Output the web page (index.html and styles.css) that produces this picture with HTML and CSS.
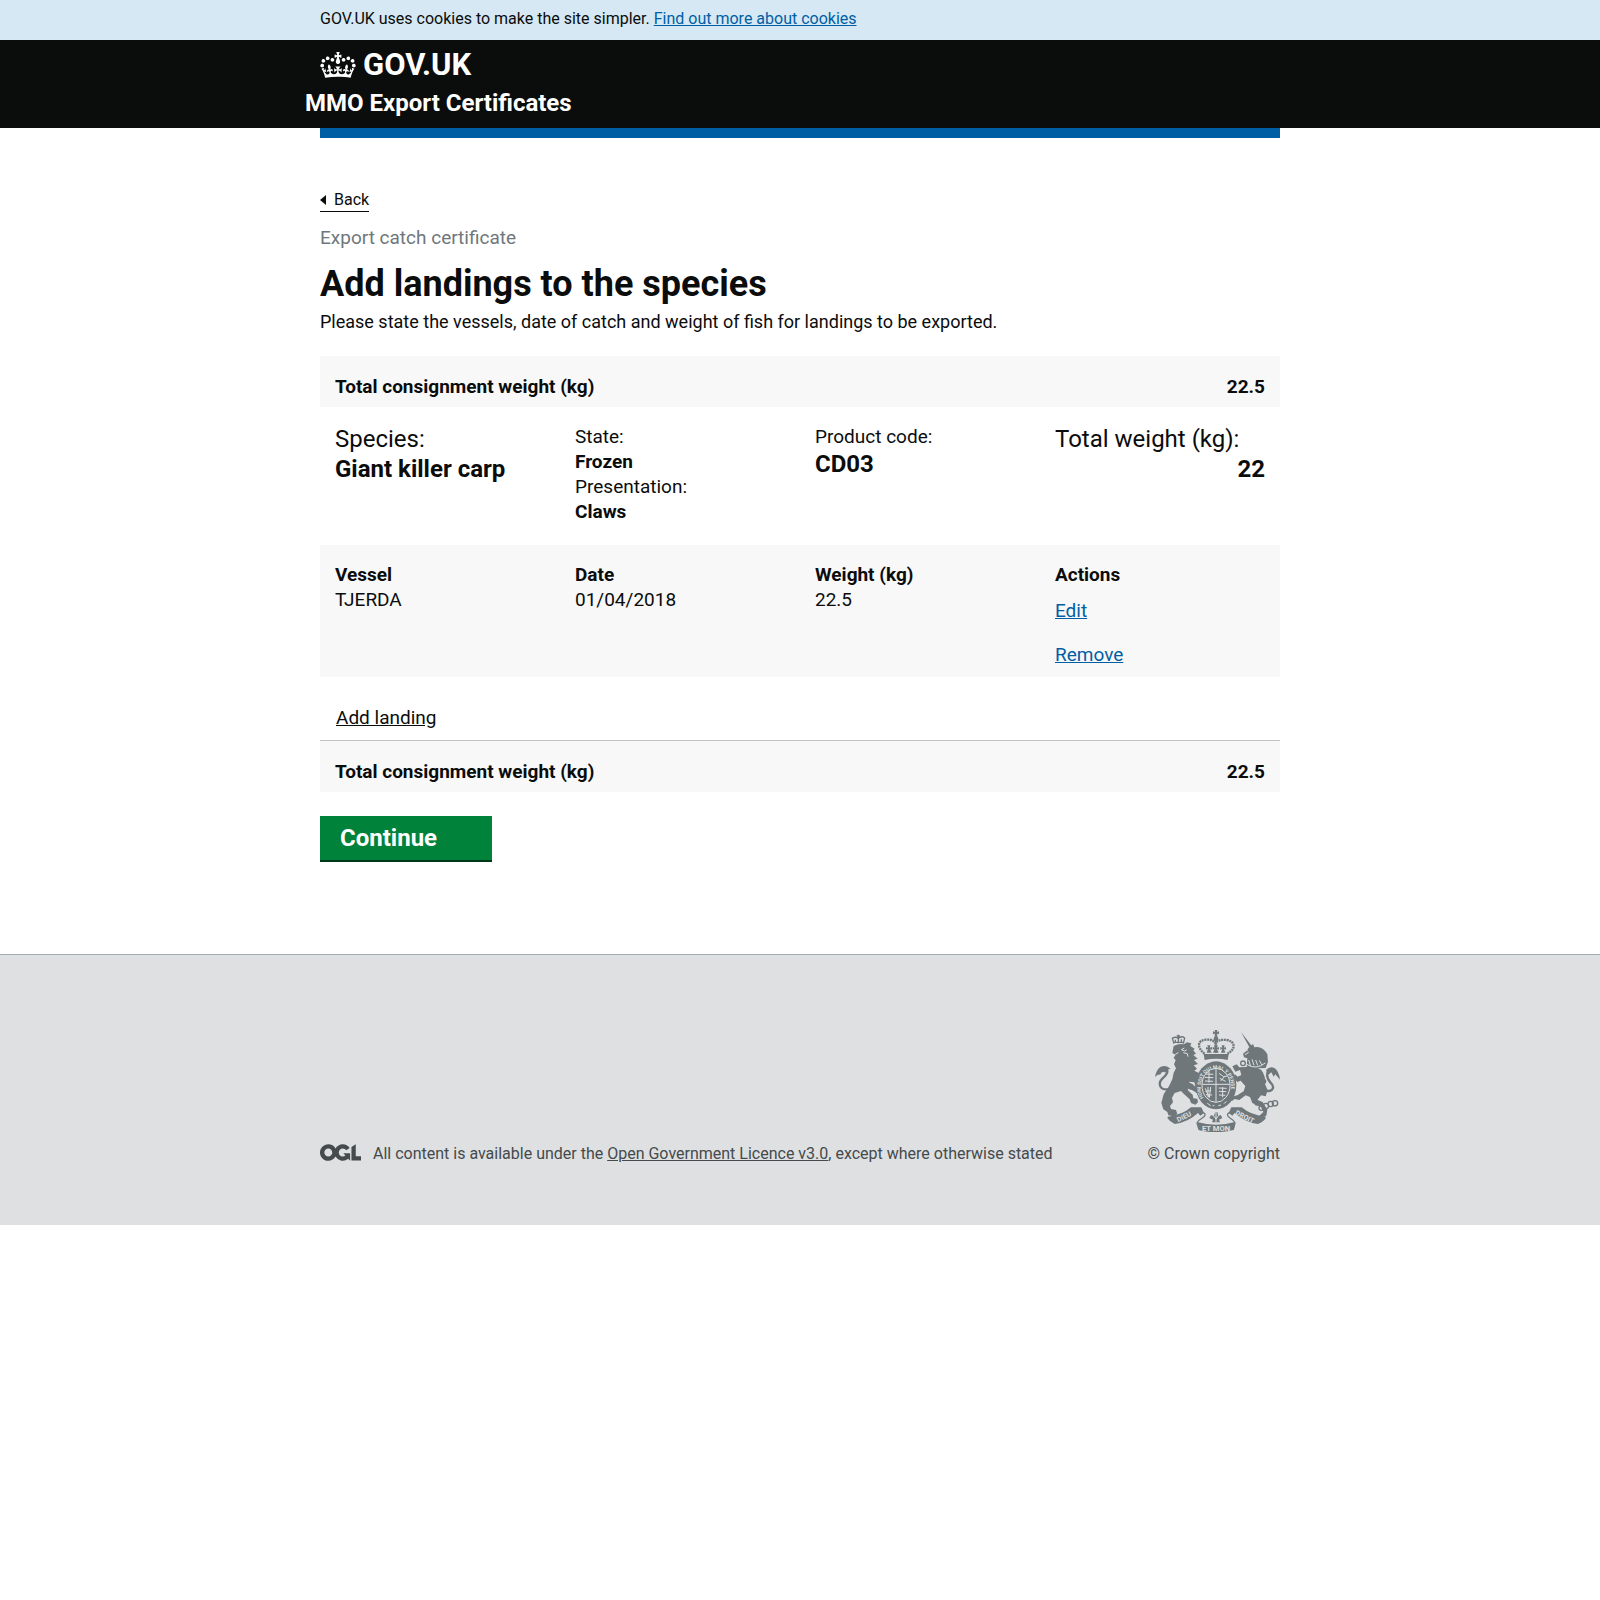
FILE: index.html
```html
<!DOCTYPE html>
<html lang="en">
<head>
<meta charset="utf-8">
<meta name="viewport" content="width=device-width, initial-scale=1">
<title>Add landings to the species - MMO Export Certificates - GOV.UK</title>
<link rel="stylesheet" href="styles.css">
</head>
<body>
<div class="cookie-bar">
  <p class="container cookie-text">GOV.UK uses cookies to make the site simpler. <a class="link" href="#cookies">Find out more about cookies</a></p>
</div>

<header class="header">
  <div class="container">
    <a class="brand" href="#home">
      <svg class="crown" viewBox="0 0 132 97" width="36" height="26" aria-hidden="true"><path fill="currentColor" fill-rule="evenodd" d="M25 30.2c3.5 1.5 7.7-.2 9.1-3.7 1.5-3.6-.2-7.8-3.9-9.2-3.6-1.4-7.6.3-9.1 3.9-1.4 3.5.3 7.5 3.9 9zM9 39.5c3.6 1.5 7.8-.2 9.2-3.7 1.5-3.6-.2-7.8-3.9-9.1-3.6-1.5-7.6.2-9.1 3.8-1.4 3.5.3 7.5 3.8 9zM4.4 57.2c3.5 1.5 7.7-.2 9.1-3.8 1.5-3.6-.2-7.7-3.9-9.1-3.5-1.5-7.6.3-9.1 3.8-1.4 3.5.3 7.6 3.9 9.1zm38.3-21.4c3.5 1.5 7.7-.2 9.1-3.8 1.5-3.6-.2-7.7-3.9-9.1-3.6-1.5-7.6.3-9.1 3.8-1.3 3.6.4 7.7 3.9 9.1zm64.4-5.6c-3.6 1.5-7.8-.2-9.1-3.7-1.5-3.6.2-7.8 3.8-9.2 3.6-1.4 7.7.3 9.2 3.9 1.3 3.5-.4 7.5-3.9 9zm15.9 9.3c-3.6 1.5-7.7-.2-9.1-3.7-1.5-3.6.2-7.8 3.7-9.1 3.6-1.5 7.7.2 9.2 3.8 1.5 3.5-.3 7.5-3.8 9zm4.7 17.7c-3.6 1.5-7.8-.2-9.2-3.8-1.5-3.6.2-7.7 3.9-9.1 3.6-1.5 7.7.3 9.2 3.8 1.3 3.5-.4 7.6-3.9 9.1zM89.3 35.8c-3.6 1.5-7.8-.2-9.2-3.8-1.4-3.6.2-7.7 3.9-9.1 3.6-1.5 7.7.3 9.2 3.8 1.4 3.6-.3 7.7-3.9 9.1zM69.7 17.7l8.9 4.7V9.3l-8.9 2.8c-.2-.3-.5-.6-.9-.9L72.4 0H59.6l3.5 11.2c-.3.3-.6.5-.9.9l-8.8-2.8v13.1l8.8-4.7c.3.3.6.7.9.9l-5 15.4v.1c-.2.8-.4 1.6-.4 2.4 0 4.1 3.1 7.5 7 8.1h.2c.3 0 .7.1 1 .1.4 0 .7 0 1-.1h.2c4-.6 7.1-4.1 7.1-8.1 0-.8-.1-1.7-.4-2.4V34l-5.1-15.4c.4-.2.7-.6 1-.9zM66 92.8c16.9 0 32.8 1.1 47.1 3.2 4-16.9 8.9-26.7 14-33.5l-9.6-3.4c1 4.9 1.1 7.2 0 10.2-1.5-1.4-3-4.3-4.2-8.7L108.6 76c2.8-2 5-3.2 7.5-3.3-4.4 9.4-10 11.9-13.6 11.2-4.3-.8-6.3-4.6-5.6-7.9 1-4.7 5.7-5.9 8-.5 4.3-8.7-3-11.4-7.6-8.8 7.1-7.2 7.9-13.5 2.1-21.1-8 6.1-8.1 12.3-4.5 20.8-4.7-5.4-12.1-2.5-9.5 6.2 3.4-5.2 7.9-2 7.2 3.1-.6 4.3-6.4 7.8-13.5 7.2-10.3-.9-10.9-8-11.2-13.8 2.5-.5 7.1 1.8 11 7.3L80.2 60c-4.1 4.4-8 5.3-12.3 5.4 1.4-4.4 8-11.6 8-11.6H55.5s6.4 7.2 7.9 11.6c-4.2-.1-8-1-12.3-5.4l1.4 16.4c3.9-5.5 8.5-7.7 10.9-7.3-.3 5.8-.9 12.8-11.1 13.8-7.2.6-12.9-2.9-13.5-7.2-.7-5 3.8-8.3 7.1-3.1 2.7-8.7-4.6-11.6-9.4-6.2 3.7-8.5 3.6-14.7-4.6-20.8-5.8 7.6-5 13.9 2.2 21.1-4.7-2.6-11.9.1-7.7 8.8 2.3-5.5 7.1-4.2 8.1.5.7 3.3-1.3 7.1-5.7 7.9-3.5.7-9-1.8-13.5-11.2 2.5.1 4.7 1.3 7.5 3.3l-4.7-15.4c-1.2 4.4-2.7 7.2-4.3 8.7-1.1-3-.9-5.3 0-10.2l-9.5 3.4c5 6.9 9.9 16.7 14 33.5 14.8-2.1 30.8-3.2 47.7-3.2z"/></svg>
      <span>GOV.UK</span>
    </a>
    <a class="service-name" href="#service">MMO Export Certificates</a>
  </div>
</header>
<div class="container"><div class="blue-bar"></div></div>

<main class="container main">
  <a class="back-link" href="#back">Back</a>
  <p class="caption">Export catch certificate</p>
  <h1 class="title">Add landings to the species</h1>
  <p class="lead">Please state the vessels, date of catch and weight of fish for landings to be exported.</p>

  <div class="total"><span>Total consignment weight (kg)</span><span>22.5</span></div>

  <dl class="species">
    <div class="species-cell large"><dt>Species:</dt><dd>Giant killer carp</dd></div>
    <div class="species-cell"><dt>State:</dt><dd>Frozen</dd><dt>Presentation:</dt><dd>Claws</dd></div>
    <div class="species-cell code"><dt>Product code:</dt><dd>CD03</dd></div>
    <div class="species-cell large weight"><dt>Total weight (kg):</dt><dd>22</dd></div>
  </dl>

  <table class="landings">
    <thead>
      <tr><th scope="col">Vessel</th><th scope="col">Date</th><th scope="col">Weight (kg)</th><th scope="col">Actions</th></tr>
    </thead>
    <tbody>
      <tr>
        <td>TJERDA</td><td>01/04/2018</td><td>22.5</td>
        <td><div class="actions"><a class="link" href="#edit">Edit</a><a class="link" href="#remove">Remove</a></div></td>
      </tr>
    </tbody>
  </table>

  <div class="add-row"><button class="add-landing" type="button">Add landing</button></div>
  <div class="total"><span>Total consignment weight (kg)</span><span>22.5</span></div>
  <button class="continue" type="submit">Continue</button>
</main>

<footer class="footer">
  <div class="container footer-row">
    <div class="licence">
      <svg class="ogl" viewBox="0 0 483.2 195.7" width="41" height="17" role="img" aria-label="Open Government Licence"><path fill="currentColor" d="M421.5 142.8V.1l-50.7 32.3v161.1h112.4v-50.7zm-122.3-9.6A47.12 47.12 0 0 1 221 97.8c0-26 21.1-47.1 47.1-47.1 16.7 0 31.4 8.7 39.7 21.8l42.7-27.2A97.63 97.63 0 0 0 268.1 0c-36.5 0-68.3 20.1-85.1 49.7A98 98 0 0 0 97.8 0C43.9 0 0 43.9 0 97.8s43.9 97.8 97.8 97.8c36.5 0 68.3-20.1 85.1-49.7a97.76 97.76 0 0 0 149.6 25.4l19.4 22.2h3v-87.8h-80l24.3 27.5zM97.8 145c-26 0-47.1-21.1-47.1-47.1s21.1-47.1 47.1-47.1 47.1 21.1 47.1 47.1S123.8 145 97.8 145"/></svg>
      <p>All content is available under the <a class="footer-link" href="#ogl">Open Government Licence v3.0</a>, except where otherwise stated</p>
    </div>
    <a class="copyright" href="#copyright">
      <svg class="arms" viewBox="45 30 375 306" width="125" height="102" aria-hidden="true">
        <defs>
          <path id="motto" d="M191 234A46 55 0 1 1 265 234"/>
        </defs>
        <g class="ink">
          <!-- centre crown -->
          <path d="M224 30h8l-1 6 6-2v9l-6-2 1 9h-8l1-9-6 2v-9l6 2z"/>
          <circle cx="228" cy="56" r="7"/>
          <path d="M191 102L266 102L263 120Q228 112 194 120Z"/>
          <path class="line dotted" d="M194 101C167 80 175 60 198 59C214 58 222 62 226 69C232 61 246 58 260 60C285 64 290 86 262 101"/>
          <path class="line dotted" d="M228 60V98"/>
          <path d="M200 98l4-12-6 3v-8l6 2-2-7h9l-2 7 7-2v8l-6-3 5 12zM219 98l5-12-6 3v-8l6 2-2-7h11l-2 7 6-2v8l-6-3 5 12zM243 98l4-12-6 3v-8l6 2-2-7h9l-2 7 6-2v8l-6-3 4 12z"/>
          <!-- lion crown -->
          <path class="line thin" d="M102 71L97 55Q107 48 115 56Q124 46 134 54L130 71M115 44V70M110 48H120M101 67H131M106 59v9M124 58v9"/>
          <!-- lion -->
          <path d="M101 78Q116 70 132 73L141 67L154 70L151 78L164 86L160 91L168 101L160 105L173 116L162 120L174 132L161 136L171 146L163 152L178 160L182 176L174 183L177 196L167 202L163 187L147 185L139 196L145 212L158 224L160 235L172 236L174 247L166 254L153 249L149 238L131 221L123 213L104 219L96 233L99 247L90 258L93 267L108 270L112 282L102 289L85 286L82 276L70 268L64 249L71 223L86 200L97 178L101 158L108 145L102 133L107 121L101 113L107 104L97 99Z"/>
          <path d="M130 178L158 193L177 209L189 205L193 216L180 225L157 211L134 203Z"/>
          <path class="line tail" d="M85 208C58 211 53 190 67 176C82 163 88 151 75 143"/>
          <path d="M45 171Q48 151 61 141Q78 132 92 147Q82 146 76 158Q67 151 60 164Q53 161 45 171Z"/>
          <!-- unicorn -->
          <path d="M303 36L337 80L329 83Z"/>
          <path d="M326 83L339 72L343 82Q366 76 382 102L384 125L377 144L353 145L364 150Q378 169 375 192L383 211L377 229L363 226L352 240L368 246L382 269L379 287L366 295L358 287L370 276L363 261L337 249L330 231L317 226L298 240L284 237L275 244L274 231L292 226L311 214L316 198L302 182L292 186L281 174L284 162L293 170L304 165L300 150L286 155L277 139L290 133L298 142L320 141L322 115L312 112L309 101L320 92Z"/>
          <path class="line tail" d="M369 210C400 220 406 201 391 187C377 172 380 153 390 149"/>
          <path d="M378 150Q390 137 403 144Q417 153 420 179L406 163L401 170L394 157L385 164Z"/>
          <!-- chain -->
          <g class="line thin"><circle cx="309" cy="130" r="7"/><circle cx="351" cy="249" r="6"/><circle cx="364" cy="264" r="7"/><circle cx="378" cy="258" r="8"/><circle cx="392" cy="252" r="8"/><circle cx="405" cy="250" r="8"/><circle cx="371" cy="184" r="6"/></g>
          <!-- garter and ribbons -->
          <ellipse cx="228" cy="196" rx="61" ry="72"/>
          <path d="M84 290Q126 285 153 262L184 262L192 279L181 287L174 279Q144 307 104 312Q89 305 82 294Z"/>
          <path d="M374 290Q332 285 305 262L274 262L266 279L277 287L284 279Q314 307 354 312Q371 305 378 293Z"/>
          <path d="M171 306Q228 322 285 306L281 330Q228 343 177 331Z"/>
          <path class="line thin" d="M190 278Q202 283 187 294Q174 301 171 309L177 329M268 278Q256 284 270 294Q282 301 285 309L280 328"/>
          <path d="M226 276l6 0 3 12 7-3 5 9-10 5 3 8h-24l3-8-11-5 5-9 8 4z"/>
        </g>
        <g class="paper-line">
          <ellipse cx="228" cy="196" rx="42" ry="51"/>
          <path d="M228 146V246M187 193H269"/>
          <path d="M196 162l24 1M194 172l26 1M195 183l24 1M207 154v34M237 160l14 10 11-2M242 183l13-15M239 175l18 9M196 205l11 27M204 201v31M212 201l-4 32M196 214l17-2M198 224l18 1M236 204l24 1M237 214l22 1M237 225l19 1M248 201v31"/>
          <path d="M202 250l10 7M218 257h5M235 257l8-2M252 251l7-7"/>
          <path d="M133 84l-9 5 10 4 6-3M130 98l12 3 2 9M115 98l-9 5M315 104l11-7M318 88l5 5M326 120l6 18M336 118l6 18M347 120l6 16M358 121l8 14M320 133q28 18 56-4"/>
          <path d="M221 288l7 9 7-9M228 276v30"/>
        </g>
        <g class="motto">
          <text font-size="15"><textPath href="#motto">HONI SOIT QUI MAL Y PENSE</textPath></text>
          <text font-size="21" transform="translate(115 307) rotate(-27)">DIEU</text>
          <text font-size="21" transform="translate(284 283) rotate(27)">DROIT</text>
          <text font-size="23" x="228" y="332" text-anchor="middle">ET MON</text>
        </g>
      </svg>
      <span>© Crown copyright</span>
    </a>
  </div>
</footer>
</body>
</html>
```
FILE: styles.css
```css
* { box-sizing: border-box; }

body {
  margin: 0;
  background: #fff;
  color: #0b0c0c;
  font-family: Roboto, "Liberation Sans", Arial, sans-serif;
  font-size: 19px;
  line-height: 25px;
}

h1, p, dl, dd { margin: 0; }

.container {
  width: 100%;
  max-width: 960px;
  margin: 0 auto;
}

.link { color: #005ea5; }

.cookie-bar {
  padding: 9px 0 11px;
  background: #d5e8f3;
}
.cookie-text {
  font-size: 16px;
  line-height: 20px;
}

.header {
  padding: 9px 0 10px;
  background: #0b0c0c;
  color: #fff;
}
.brand {
  display: flex;
  align-items: center;
  gap: 7px;
  width: max-content;
  margin-bottom: 7px;
  color: #fff;
  font-size: 31px;
  font-weight: 700;
  line-height: 32px;
  text-decoration: none;
}
.service-name {
  display: block;
  margin-left: -15px;
  color: #fff;
  font-size: 24px;
  font-weight: 700;
  line-height: 30px;
  text-decoration: none;
}
.blue-bar {
  height: 10px;
  background: #005ea5;
}

.main { padding: 51px 0 92px; }

.back-link {
  display: flex;
  align-items: center;
  gap: 8px;
  width: max-content;
  padding-bottom: 1px;
  border-bottom: 1px solid #0b0c0c;
  color: #0b0c0c;
  font-size: 16px;
  line-height: 21px;
  text-decoration: none;
}
.back-link::before {
  content: "";
  border: 5px solid transparent;
  border-left-width: 0;
  border-right: 6px solid #0b0c0c;
}

.caption {
  margin-top: 13px;
  color: #6f777b;
}
.title {
  margin-top: 14px;
  font-size: 36px;
  font-weight: 700;
  line-height: 40px;
}
.lead {
  margin: 5px 0 22px;
  font-size: 18px;
}

.total {
  display: flex;
  justify-content: space-between;
  padding: 18px 15px 8px;
  background: #f8f8f8;
  font-weight: 700;
}

.species {
  display: grid;
  grid-template-columns: repeat(4, 1fr);
  padding: 17px 0 21px;
}
.species-cell { padding: 0 15px; }
.species-cell dd { font-weight: 700; }
.large,
.code dd {
  font-size: 24px;
  line-height: 30px;
}
.weight dd { text-align: right; }

.landings {
  width: 100%;
  border-spacing: 0;
  table-layout: fixed;
  background: #f8f8f8;
  text-align: left;
}
.landings th { padding: 17px 15px 0; }
.landings td {
  padding: 0 15px;
  vertical-align: top;
}
.actions {
  display: flex;
  flex-direction: column;
  align-items: flex-start;
  gap: 19px;
  padding: 11px 0 10px;
}

.add-row {
  padding: 28px 16px 10px;
  border-bottom: 1px solid #bfc1c3;
}
.add-landing {
  display: block;
  padding: 0;
  border: 0;
  background: none;
  color: #0b0c0c;
  font: inherit;
  text-decoration: underline;
  cursor: pointer;
}

.continue {
  display: block;
  margin-top: 24px;
  padding: 7px 55px 7px 20px;
  border: 0;
  border-bottom: 2px solid #003618;
  background: #00823b;
  color: #fff;
  font: inherit;
  font-size: 24px;
  font-weight: 700;
  line-height: 30px;
  cursor: pointer;
}

.footer {
  padding: 75px 0 61px;
  border-top: 1px solid #a1acb2;
  background: #dee0e2;
  color: #454a4c;
  font-size: 16px;
  line-height: 20px;
}
.footer-row {
  display: flex;
  align-items: flex-end;
  justify-content: space-between;
}
.licence {
  display: flex;
  align-items: flex-start;
  gap: 12px;
}
.footer-link { color: inherit; }
.copyright {
  display: flex;
  flex-direction: column;
  align-items: flex-end;
  gap: 12px;
  color: inherit;
  text-decoration: none;
}

.ink { fill: #6f777b; }
.line {
  fill: none;
  stroke: #6f777b;
}
.thin { stroke-width: 4; }
.tail { stroke-width: 7; }
.dotted {
  stroke-width: 7;
  stroke-dasharray: 6 2;
}
.paper-line {
  fill: none;
  stroke: #dee0e2;
  stroke-width: 3;
}
.motto {
  fill: #dee0e2;
  font-weight: 700;
}
```
